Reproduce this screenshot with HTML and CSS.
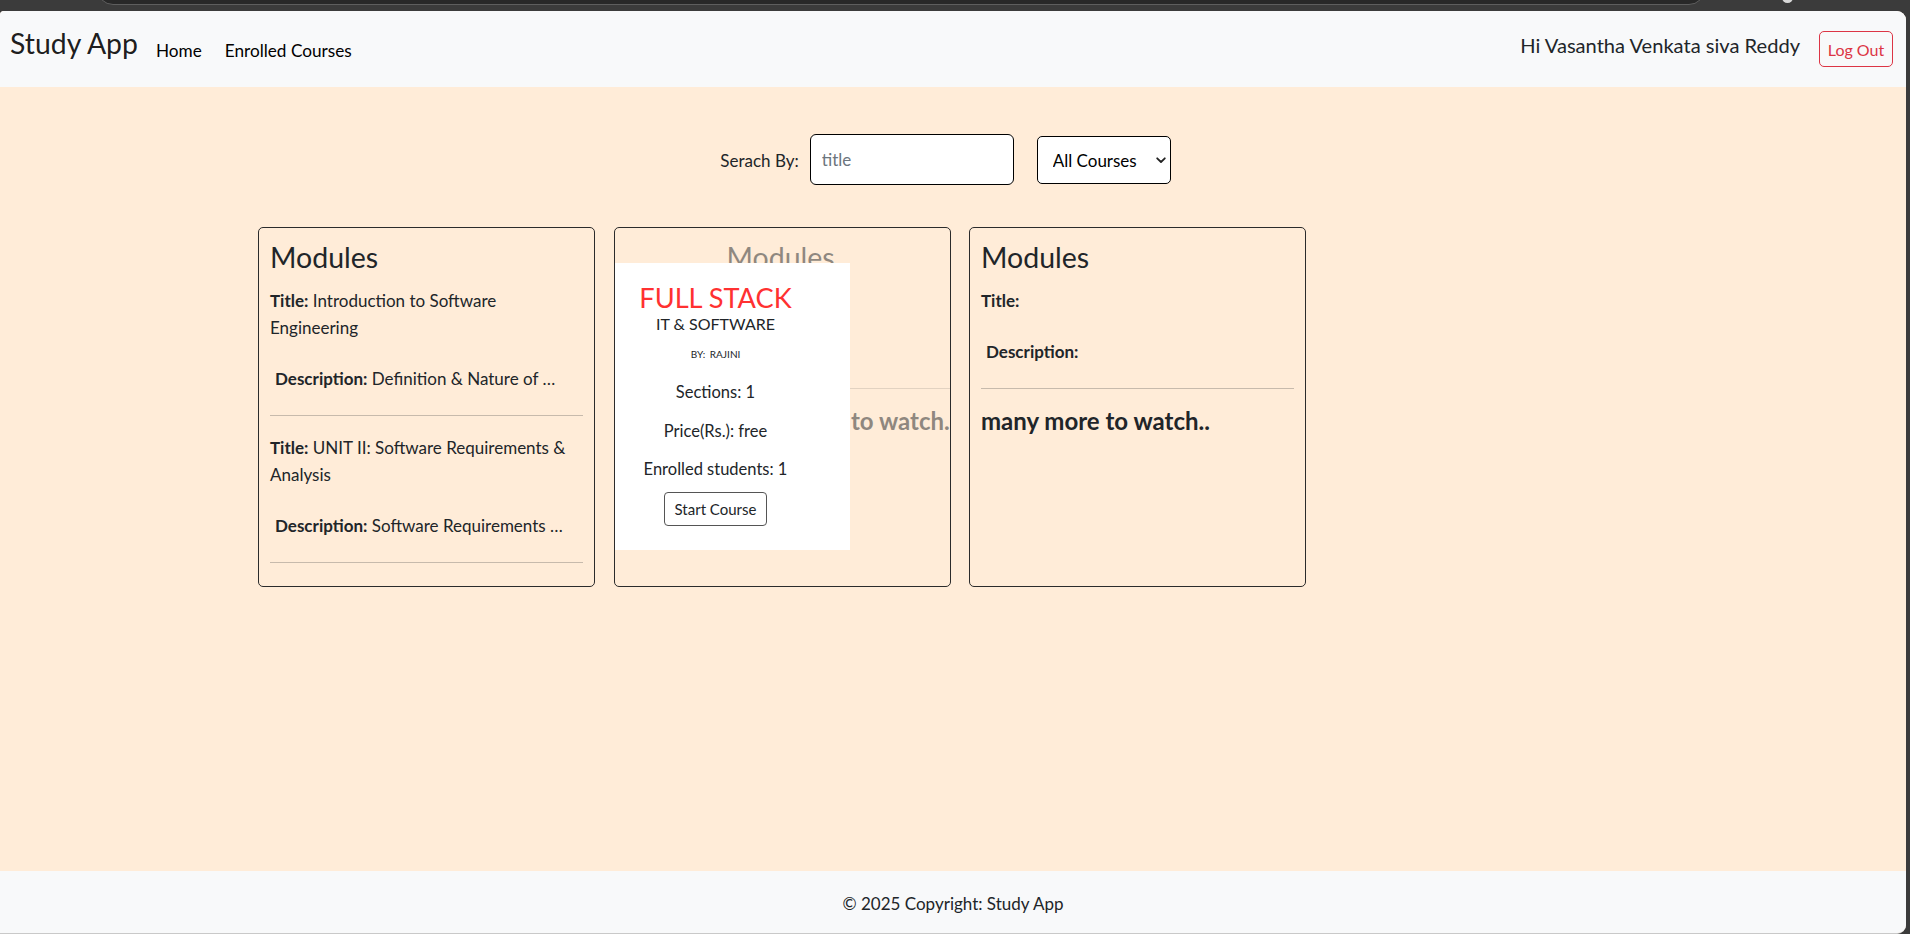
FILE: index.html
```html
<!DOCTYPE html>
<html lang="en">
<head>
<meta charset="utf-8">
<title>Study App</title>
<link rel="stylesheet" href="styles.css">
</head>
<body>
<div class="chrome">
  <div class="urlbar"></div>
  <div class="chrome-icon"></div>
</div>
<div class="frame">
  <nav class="navbar">
    <a class="brand">Study App</a>
    <a class="nav-link">Home</a>
    <a class="nav-link">Enrolled Courses</a>
    <div class="nav-right">
      <span class="greeting">Hi Vasantha Venkata siva Reddy</span>
      <button class="btn-logout">Log Out</button>
    </div>
  </nav>
  <main class="main">
    <div class="search-row">
      <label class="search-label">Serach By:</label>
      <input class="search-input" type="text" placeholder="title">
      <span class="select-wrap">
        <select class="course-select"><option>All Courses</option></select>
        <svg class="chevron" width="10" height="7" viewBox="0 0 10 7"><path d="M1.2 1.3 L5 5 L8.8 1.3" fill="none" stroke="#222" stroke-width="1.8" stroke-linecap="round" stroke-linejoin="round"/></svg>
      </span>
    </div>
    <div class="cards">
      <div class="card">
        <h3 class="modules">Modules</h3>
        <div class="module">
          <p class="mod-title"><b>Title:</b> Introduction to Software Engineering</p>
          <p class="mod-desc"><b>Description:</b> Definition &amp; Nature of Software, Software Engineering Principles</p>
          <hr class="mod-hr">
        </div>
        <div class="module">
          <p class="mod-title"><b>Title:</b> UNIT II: Software Requirements &amp; Analysis</p>
          <p class="mod-desc"><b>Description:</b> Software Requirements Engineering, Requirement Elicitation</p>
          <hr class="mod-hr">
        </div>
      </div>
      <div class="card">
        <div class="card-content shifted">
          <h3 class="modules">Modules</h3>
          <div class="module">
            <p class="mod-title"><b>Title:</b></p>
            <p class="mod-desc"><b>Description:</b></p>
            <hr class="mod-hr">
          </div>
          <p class="more">many more to watch..</p>
        </div>
        <div class="overlay">
          <p class="ov-title">FULL STACK</p>
          <p class="ov-cat">IT &amp; SOFTWARE</p>
          <p class="ov-by">BY: RAJINI</p>
          <p class="ov-line ov-sections">Sections: 1</p>
          <p class="ov-line ov-price">Price(Rs.): free</p>
          <p class="ov-line ov-enrolled">Enrolled students: 1</p>
          <button class="ov-btn">Start Course</button>
        </div>
      </div>
      <div class="card">
        <h3 class="modules">Modules</h3>
        <div class="module">
          <p class="mod-title"><b>Title:</b></p>
          <p class="mod-desc"><b>Description:</b></p>
          <hr class="mod-hr">
        </div>
        <p class="more">many more to watch..</p>
      </div>
    </div>
  </main>
  <footer class="footer">© 2025 Copyright: Study App</footer>
</div>
</body>
</html>
```

FILE: styles.css
```css
* { box-sizing: border-box; }

html, body {
  margin: 0;
  padding: 0;
  background: #3b3b3b;
  overflow: hidden;
}

body {
  font-family: "Lato", "Noto Sans", sans-serif;
  color: #212529;
  width: 1910px;
  height: 934px;
}

.chrome {
  height: 11px;
  position: relative;
  overflow: hidden;
}

.urlbar {
  position: absolute;
  left: 97px;
  top: -30px;
  width: 1608px;
  height: 35px;
  border: 1px solid #5e5e5e;
  border-radius: 16px;
  background: #282828;
}

.chrome-icon {
  position: absolute;
  left: 1782px;
  top: -8px;
  width: 11px;
  height: 11px;
  border-radius: 50%;
  background: #d8d8d8;
}

.frame {
  width: 1906px;
  height: 923px;
  background: #ffecd8;
  border-radius: 4px 9px 9px 0;
  border-bottom: 1px solid #c9c9c9;
  overflow: hidden;
  display: flex;
  flex-direction: column;
}

/* navbar */
.navbar {
  height: 76px;
  flex: none;
  background: #f8f9fa;
  display: flex;
  align-items: center;
  padding: 0 13px 0 10px;
}

.brand {
  font-size: 28.4px;
  line-height: 1.2;
  color: rgba(0, 0, 0, 0.9);
  margin-right: 18px;
  margin-bottom: 12px;
}

.nav-link {
  font-size: 17.2px;
  line-height: 1.2;
  color: #000;
  margin-right: 23px;
  margin-top: 5px;
}

.nav-right {
  margin-left: auto;
  display: flex;
  align-items: center;
  gap: 19px;
}

.greeting {
  font-size: 20.1px;
  line-height: 1.2;
  color: #212529;
  margin-bottom: 8px;
}

.btn-logout {
  width: 74px;
  height: 36px;
  border: 1px solid #dc3545;
  border-radius: 5px;
  background: transparent;
  color: #dc3545;
  font-family: "Lato", sans-serif;
  font-size: 16px;
  padding: 0;
}

/* main */
.main {
  flex: 1;
  padding-top: 47px;
}

.search-row {
  display: flex;
  justify-content: center;
  align-items: center;
  height: 51px;
  padding-right: 15px;
}

.search-label {
  font-size: 17px;
  margin-right: 11px;
  margin-top: 2px;
  color: #212529;
}

.search-input {
  width: 204px;
  height: 51px;
  border: 1px solid #000;
  border-radius: 6px;
  padding: 0 11px;
  font-family: "Lato", sans-serif;
  font-size: 17px;
  background: #fff;
  margin-right: 23px;
  outline: none;
}

.search-input::placeholder {
  color: #6c757d;
}

.select-wrap {
  position: relative;
  display: inline-block;
  height: 48px;
}

.course-select {
  -webkit-appearance: none;
  appearance: none;
  width: 134px;
  height: 48px;
  border: 1px solid #000;
  border-radius: 5px;
  background: #fff;
  color: #000;
  font-family: "Lato", sans-serif;
  font-size: 17px;
  padding: 2px 0 0 15px;
}

.chevron {
  position: absolute;
  right: 5px;
  top: 21px;
  pointer-events: none;
}

/* cards */
.cards {
  display: flex;
  gap: 18.5px;
  padding-left: 258px;
  margin-top: 42px;
}

.card {
  position: relative;
  width: 337px;
  height: 360px;
  border: 1px solid #2b2b2b;
  border-radius: 5px;
  padding: 11px;
  overflow: hidden;
}

.modules {
  font-size: 28.5px;
  font-weight: 400;
  line-height: 36px;
  margin: 0;
  color: #212529;
}

.mod-title,
.mod-desc {
  font-size: 17px;
  line-height: 27px;
  margin: 0;
}

.mod-title b,
.mod-desc b {
  font-weight: 700;
}

.module:first-of-type .mod-title {
  margin-top: 12px;
}

.mod-desc {
  margin-top: 24px;
  padding: 0 20px 0 5px;
  white-space: nowrap;
  overflow: hidden;
  text-overflow: ellipsis;
}

.mod-hr {
  margin: 23px 0 18px;
  border: 0;
  border-top: 1px solid rgba(33, 37, 41, 0.25);
  height: 0;
}

.more {
  font-size: 24px;
  font-weight: 700;
  line-height: 28.8px;
  margin: 1px 0 0;
  white-space: nowrap;
}

.card-content {
  width: 313px;
}

.shifted {
  transform: translateX(101px);
  opacity: 0.5;
}

/* course overlay */
.overlay {
  position: absolute;
  left: 0;
  top: 35px;
  width: 235px;
  height: 287px;
  background: #fff;
  padding: 17.7px 33px 0 0;
  text-align: center;
}

.overlay p {
  margin: 0;
}

.ov-title {
  font-size: 27.2px;
  line-height: 33.2px;
  color: #ff3131;
}

.ov-cat {
  font-size: 16px;
  line-height: 19.2px;
  color: #212529;
}

.ov-by {
  font-size: 10px;
  line-height: 12px;
  margin-top: 14.7px !important;
  word-spacing: 2px;
}

.ov-line {
  font-size: 16.5px;
  line-height: 19.8px;
}

.ov-sections { margin-top: 23.6px !important; }
.ov-price { margin-top: 19.2px !important; }
.ov-enrolled { margin-top: 18.2px !important; }

.ov-btn {
  margin-top: 11.5px;
  width: 103px;
  height: 34px;
  border: 1px solid #555;
  border-radius: 4px;
  background: #fff;
  color: #212529;
  font-family: "Lato", sans-serif;
  font-size: 15px;
  padding: 0;
}

/* footer */
.footer {
  height: 62px;
  flex: none;
  background: #f8f9fa;
  display: flex;
  justify-content: center;
  align-items: center;
  font-size: 17px;
  padding: 2px 0 0 0;
  color: #212529;
}
```
